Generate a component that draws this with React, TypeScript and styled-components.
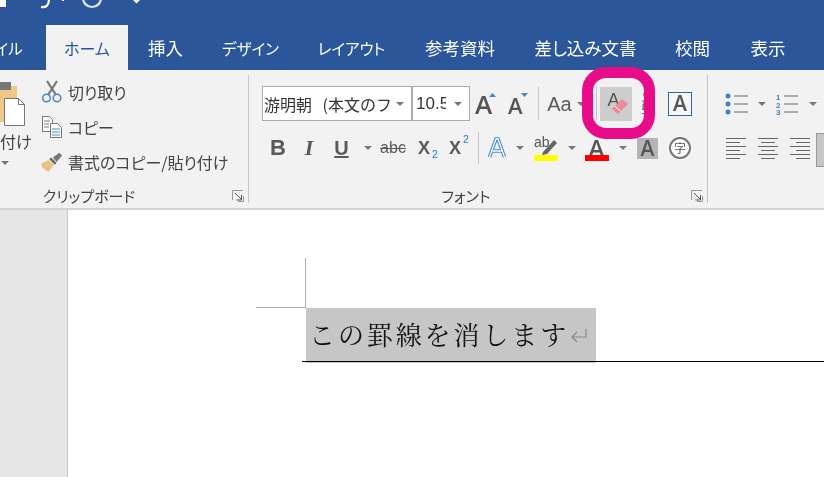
import React from "react";
import styled, { createGlobalStyle } from "styled-components";

const UI = `"Noto Sans CJK JP", "Liberation Sans", sans-serif`;
const Global = createGlobalStyle`
  html, body { margin: 0; padding: 0; background: #fff; overflow: hidden; }
  #root { width: 824px; height: 477px; }
`;
const Frame = styled.div`
  position: relative; width: 824px; height: 477px; overflow: hidden; display: flex; flex-direction: column;
  font-family: ${UI}; color: #444; font-feature-settings: "palt";
`;
const TitleBar = styled.div`height: 25px; background: #2b579a; flex: none;`;
const TabBar = styled.div`height: 45px; background: #2b579a; display: flex; align-items: stretch; flex: none; margin-left: -54px;`;
const Tab = styled.div<{ $active?: boolean; $w: number; $size?: number }>`
  width: ${p => p.$w}px; flex: none; display: flex; align-items: center; justify-content: center; font-size: ${p => p.$size ?? 17.5}px;
  color: ${p => (p.$active ? "#2b579a" : "#fff")}; background: ${p => (p.$active ? "#f2f2f2" : "transparent")};
`;
const Ribbon = styled.div`
  height: 138px; background: #f2f2f2; border-bottom: 2px solid #d4d4d4; display: flex; flex: none; position: relative;
`;
const Group = styled.div<{ $w: number; $noSep?: boolean }>`
  width: ${p => p.$w}px; flex: none; position: relative; box-sizing: border-box; display: flex; flex-direction: column;
  &::after { content: ""; display: ${p => (p.$noSep ? "none" : "block")}; position: absolute; right: 0; top: 5px; bottom: 5px; width: 1px; background: #c6c6c6; }
`;
const GroupBody = styled.div`flex: 1; display: flex; min-height: 0;`;
const ParaBody = styled.div`flex: 1; display: flex; flex-direction: column; padding-left: 17px;`;
const GroupLabel = styled.div<{ $pr: number }>`
  height: 26px; font-size: 15px; line-height: 28px; color: #444; text-align: center; flex: none; padding-right: ${p => p.$pr}px; box-sizing: border-box;
`;
const Launcher = styled.svg`position: absolute; right: 5px; top: 120px;`;
const PasteCol = styled.div`width: 41px; flex: none; position: relative; overflow: hidden; font-size: 16px;`;
const PasteArt = styled.svg`display: block;`;
const PasteLabel = styled.div`position: absolute; left: 0; top: 60px; white-space: nowrap; line-height: 22px;`;
const PasteCaret = styled.i`
  position: absolute; left: 1px; top: 91px; width: 0; height: 0;
  border-left: 4px solid transparent; border-right: 4px solid transparent; border-top: 4px solid #777;
`;
const ClipList = styled.div`display: flex; flex-direction: column; padding-top: 4px;`;
const ClipRow = styled.div`height: 35px; display: flex; align-items: center; gap: 5px; font-size: 16px; white-space: nowrap; color: #444;`;
const ClipIcon = styled.svg`flex: none;`;
const FontBody = styled.div`flex: 1; display: flex; flex-direction: column; padding-left: 13px;`;
const Row = styled.div<{ $h: number; $pt: number }>`
  height: ${p => p.$h}px; margin-top: ${p => p.$pt}px; display: flex; align-items: center; flex: none;
`;
const ComboGroup = styled.div`display: flex; height: 35px; border: 1px solid #ababab; background: #fff; box-sizing: border-box; flex: none;`;
const Combo = styled.div<{ $w: number; $bl?: boolean }>`
  width: ${p => p.$w}px; display: flex; align-items: center; justify-content: space-between; box-sizing: border-box; overflow: hidden;
  border-left: ${p => (p.$bl ? "2px solid #ababab" : "none")}; padding: 0 7px 0 ${p => (p.$bl ? 3 : 1)}px;
`;
const ComboText = styled.span<{ $size: number; $w: number; $font: string }>`
  font-size: ${p => p.$size}px; font-family: ${p => p.$font}; color: #333; white-space: nowrap; overflow: hidden; width: ${p => p.$w}px; display: block; line-height: 32px; flex: none;
  font-feature-settings: normal; word-spacing: 7px;
`;
const Caret = styled.i<{ $ml?: number }>`
  display: block; flex: none; width: 0; height: 0; margin-left: ${p => p.$ml ?? 0}px;
  border-left: 4px solid transparent; border-right: 4px solid transparent; border-top: 4px solid #777;
`;
const Sep = styled.div<{ $h: number; $ml: number; $mr: number }>`
  width: 1px; height: ${p => p.$h}px; margin: 0 ${p => p.$mr}px 0 ${p => p.$ml}px; background: #c6c6c6; flex: none;
`;
const Glyph = styled.span<{ $size: number; $w: number; $ml?: number; $font?: string; $weight?: number; $italic?: boolean; $under?: boolean; $strike?: boolean; $left?: boolean }>`
  display: flex; align-items: center; justify-content: ${p => (p.$left ? "flex-start" : "center")}; flex: none; width: ${p => p.$w}px; position: relative; margin-left: ${p => p.$ml ?? 0}px;
  font-family: ${p => p.$font ?? `"Liberation Sans", sans-serif`}; font-size: ${p => p.$size}px; font-weight: ${p => p.$weight ?? 400};
  font-style: ${p => (p.$italic ? "italic" : "normal")}; text-decoration: ${p => (p.$under ? "underline" : p.$strike ? "line-through" : "none")};
  color: #5a5a5a; line-height: 1;
`;
const Script = styled.span<{ $up?: boolean }>`
  position: absolute; left: 14px; top: ${p => (p.$up ? -5 : 10)}px; font-size: 10.5px; color: #2b7cd3; font-weight: 400;
`;
const IconSvg = styled.svg<{ $ml?: number }>`flex: none; display: block; overflow: visible; margin-left: ${p => p.$ml ?? 0}px;`;
const ClearBtn = styled.div`width: 32px; height: 34px; background: #cdcdcd; flex: none;`;
const ClearArt = styled.svg`display: block;`;
const BoxedA = styled.div`
  width: 24px; height: 24px; box-sizing: border-box; border: 1px solid #2b6ca8; background: #f7f7f7; display: flex; align-items: center; justify-content: center;
  font-family: "Open Sans", sans-serif; font-weight: 600; font-size: 21px; color: #555; margin-left: 13px; flex: none; line-height: 1;
`;
const ShadedA = styled.div`
  width: 21px; height: 21px; background: #b4b4b4; display: flex; align-items: center; justify-content: center; font-family: "Open Sans", sans-serif; font-weight: 600;
  font-size: 21px; color: #555; flex: none; margin-left: 10px; line-height: 1;
`;
const Enclosed = styled.div`
  width: 22px; height: 22px; box-sizing: border-box; border: 2px solid #777; border-radius: 50%; background: #fff; font-size: 12px; display: flex; align-items: center; justify-content: center;
  color: #555; flex: none; margin-left: 11px; line-height: 1;
`;
const JustifyBtn = styled.div`
  width: 30px; height: 34px; margin: 4px 0 0 6px; background: #c6c6c6; border: 1px solid #999; flex: none; box-sizing: border-box;
`;
const Highlight = styled.div`
  position: absolute; left: 582px; top: 67px; width: 73px; height: 72px; box-sizing: border-box; border: 11px solid #e80b8a; border-radius: 24px; pointer-events: none;
`;
const Workspace = styled.div`flex: 1; display: flex; min-height: 0;`;
const Gutter = styled.div`width: 67px; flex: none; background: #e6e6e6; border-right: 1px solid #c6c6c6;`;
const Page = styled.div`flex: 1; background: #fff; padding: 48px 0 0 188px; min-width: 0;`;
const CropMark = styled.div`
  width: 50px; height: 50px; box-sizing: border-box; border-right: 1px solid #b0b0b0; border-bottom: 1px solid #b0b0b0;
`;
const Para = styled.div`margin-left: 46px; height: 54px; border-bottom: 1px solid #000; box-sizing: border-box;`;
const Selected = styled.div`
  display: flex; align-items: center; margin-left: 4px; width: 290px; height: 55px; background: #c6c6c6; box-sizing: border-box; padding: 0 0 5px 3px; mix-blend-mode: multiply;
  font-family: "Noto Serif CJK JP", "Liberation Serif", serif; font-feature-settings: normal; font-size: 26px; letter-spacing: 2.9px; color: #111; white-space: nowrap;
`;
const ReturnMark = styled.svg`flex: none; margin: 5px 0 0 1px;`;

const Launch = () => (
  <Launcher width="12" height="12" viewBox="0 0 12 12" fill="none">
    <path d="M.5 10V.5H11" stroke="#999" />
    <path d="M3 3l6.500 6.500M9.500 5v5h-5" stroke="#555" />
    <path d="M11.500 6v5.500H6" stroke="#999" />
  </Launcher>
);

export default function App() {
  return (
    <Frame>
      <Global />
      <TitleBar>
        <svg width="160" height="25" viewBox="0 0 160 25" fill="none" style={{ display: "block" }}>
          <rect x="0" y="0" width="6" height="7" fill="#fff" />
          <path d="M41 7c5 1 8-2 8-8" stroke="#fff" strokeWidth="2.200" />
          <rect x="62" y="0" width="2" height="1" fill="#fff" />
          <circle cx="92" cy="-2" r="9" stroke="#e4e8f0" strokeWidth="2.200" />
          <path d="M133 0h7l-3.500 3.500z" fill="#fff" />
        </svg>
      </TitleBar>
      <TabBar>
        <Tab $w={100} $size={15.5}>ファイル</Tab>
        <Tab $w={82} $active $size={16}>ホーム</Tab>
        <Tab $w={75}>挿入</Tab>
        <Tab $w={95} $size={15.6}>デザイン</Tab>
        <Tab $w={107} $size={15.5}>レイアウト</Tab>
        <Tab $w={110}>参考資料</Tab>
        <Tab $w={141}>差し込み文書</Tab>
        <Tab $w={73}>校閲</Tab>
        <Tab $w={78}>表示</Tab>
      </TabBar>
      <Ribbon>
        <Group $w={249}>
          <GroupBody>
            <PasteCol>
              <PasteArt width="41" height="60" viewBox="0 0 41 60">
                <path d="M-4 16h21v12H4v24H-4z" fill="#f0c988" />
                <rect x="0" y="12" width="11" height="8" fill="#777" />
                <path d="M4.500 28.500h14l6 6v21h-20z" fill="#fff" stroke="#777" />
                <path d="M18.500 28.500v6h6" fill="none" stroke="#777" />
              </PasteArt>
              <PasteLabel>付け</PasteLabel>
              <PasteCaret />
            </PasteCol>
            <ClipList>
              <ClipRow>
                <ClipIcon width="22" height="24" viewBox="0 0 22 24" fill="none">
                  <path d="M6 1l9 14M16 1L7 15" stroke="#777" strokeWidth="2.200" />
                  <circle cx="5.500" cy="18" r="3.800" stroke="#4a86c5" strokeWidth="1.500" />
                  <circle cx="16" cy="18" r="3.800" stroke="#4a86c5" strokeWidth="1.500" />
                </ClipIcon>
                切り取り
              </ClipRow>
              <ClipRow>
                <ClipIcon width="22" height="24" viewBox="0 0 22 24" fill="none">
                  <path d="M1.500 1.500h7l3 3v12h-10z" fill="#fff" stroke="#777" />
                  <path d="M9.500 8.500h7l4 4v10h-11z" fill="#fff" stroke="#777" />
                  <path d="M3 6h6M3 9h5M3 12h5" stroke="#777" />
                  <path d="M11 14h8M11 17h8M11 20h8" stroke="#4a86c5" />
                </ClipIcon>
                コピー
              </ClipRow>
              <ClipRow>
                <ClipIcon width="22" height="24" viewBox="0 0 24 24" fill="none">
                  <path d="M0 14l8-4 6 5-6 8-2-2-1 1-1-3-2 0z" fill="#eabf83" />
                  <path d="M9 9l6 6 2-2-6-6z" fill="#666" />
                  <path d="M13 7l7-5 3 3-6 7z" fill="#777" />
                </ClipIcon>
                書式のコピー/貼り付け
              </ClipRow>
            </ClipList>
          </GroupBody>
          <GroupLabel $pr={71}>クリップボード<Launch /></GroupLabel>
        </Group>
        <Group $w={459}>
          <FontBody>
            <Row $h={35} $pt={16}>
              <ComboGroup>
                <Combo $w={148}>
                  <ComboText $size={16} $w={129} $font={`"Noto Sans CJK JP", sans-serif`}>游明朝 (本文のフォント)</ComboText>
                  <Caret />
                </Combo>
                <Combo $w={58} $bl>
                  <ComboText $size={17} $w={30} $font={`"Liberation Sans", sans-serif`}>10.5</ComboText>
                  <Caret />
                </Combo>
              </ComboGroup>
              <IconSvg width="24" height="22" viewBox="0 0 24 22" $ml={5}>
                <text x="0" y="20.500" fontFamily="Open Sans" fontWeight="600" fontSize="26" fill="#555">A</text>
                <path d="M14 4l3.500-4 3.500 4z" fill="#4a86c5" />
              </IconSvg>
              <IconSvg width="20" height="22" viewBox="0 0 20 22" $ml={9}>
                <text x="0" y="20.500" fontFamily="Open Sans" fontWeight="600" fontSize="22" fill="#555">A</text>
                <path d="M13 0h7l-3.500 4z" fill="#4a86c5" />
              </IconSvg>
              <Sep $h={33} $ml={10} $mr={8} />
              <Glyph $size={20} $w={25}>Aa</Glyph>
              <Caret $ml={5} />
              <Sep $h={33} $ml={11} $mr={3} />
              <ClearBtn>
                <ClearArt width="32" height="34" viewBox="0 0 32 34" fill="none">
                  <text x="7.500" y="19" fontFamily="Liberation Sans" fontSize="18" fill="#555">A</text>
                  <path d="M12 22l10-10 6 5-10 10z" fill="#ea8a9a" />
                  <path d="M15 19l6 5.500" stroke="#f3f3f3" />
                </ClearArt>
              </ClearBtn>
              <IconSvg width="13" height="24" viewBox="0 0 13 24" $ml={10} fill="none">
                <path d="M1 2.500h7M2 .5v4" stroke="#777" />
                <path d="M0 9h10M1 12.500h8v5H1zM2 9v8M0 17.500h13M0 21.500h11" stroke="#666" />
              </IconSvg>
              <BoxedA>A</BoxedA>
            </Row>
            <Row $h={30} $pt={12}>
              <Glyph $size={22} $w={32} $weight={700}>B</Glyph>
              <Glyph $size={22} $w={30} $font={`"Liberation Serif", serif`} $italic $weight={700}>I</Glyph>
              <Glyph $size={20} $w={35} $weight={700} $under>U</Glyph>
              <Caret $ml={5} />
              <Glyph $size={16} $w={24} $ml={9} $strike>abc</Glyph>
              <Glyph $size={18} $w={14} $ml={13} $weight={700} $left>X<Script>2</Script></Glyph>
              <Glyph $size={18} $w={14} $ml={17} $weight={700} $left>X<Script $up>2</Script></Glyph>
              <Sep $h={32} $ml={15} $mr={9} />
              <IconSvg width="18" height="22" viewBox="0 0 18 22" fill="none">
                <path d="M1.500 20L8 2h2l6.500 18M4.500 14h9" stroke="#4a8ad4" strokeWidth="3.600" />
                <path d="M1.500 20L8 2h2l6.500 18M4.500 14h9" stroke="#fff" strokeWidth="1.300" />
              </IconSvg>
              <Caret $ml={10} />
              <IconSvg width="24" height="26" viewBox="0 0 24 26" $ml={10} fill="none">
                <text x="0" y="12" fontFamily="Liberation Sans" fontSize="14" fill="#555">ab</text>
                <path d="M9 17l11-12 3 3-10 11-5 1z" fill="#666" />
                <rect x="0" y="20" width="24" height="6" fill="#ffff00" />
              </IconSvg>
              <Caret $ml={10} />
              <IconSvg width="24" height="26" viewBox="0 0 24 26" $ml={9}>
                <text x="3.500" y="22" fontFamily="Open Sans" fontWeight="600" fontSize="24" fill="#555">A</text>
                <rect x="0" y="20" width="24" height="6" fill="#ff0000" />
              </IconSvg>
              <Caret $ml={10} />
              <ShadedA>A</ShadedA>
              <Enclosed>字</Enclosed>
            </Row>
            <GroupLabel $pr={38} style={{ marginTop: "auto" }}>フォント<Launch /></GroupLabel>
          </FontBody>
        </Group>
        <Group $w={116} $noSep>
          <ParaBody>
            <Row $h={35} $pt={16}>
              <IconSvg width="24" height="22" viewBox="0 0 24 22" fill="none">
                <circle cx="3" cy="3" r="2.500" fill="#4a7ebb" /><circle cx="3" cy="11" r="2.500" fill="#4a7ebb" /><circle cx="3" cy="19" r="2.500" fill="#4a7ebb" />
                <path d="M9 3h14M9 11h14M9 19h14" stroke="#666" />
              </IconSvg>
              <Caret $ml={9} />
              <IconSvg width="24" height="22" viewBox="0 0 24 22" fill="none" $ml={10}>
                <text x="0" y="7" fontFamily="Liberation Sans" fontSize="8" fontWeight="700" fill="#4a7ebb">1</text>
                <text x="0" y="14.500" fontFamily="Liberation Sans" fontSize="8" fontWeight="700" fill="#4a7ebb">2</text>
                <text x="0" y="22" fontFamily="Liberation Sans" fontSize="8" fontWeight="700" fill="#4a7ebb">3</text>
                <path d="M8 3h14M8 11h14M8 19h14" stroke="#666" />
              </IconSvg>
              <Caret $ml={9} />
            </Row>
            <Row $h={30} $pt={12}>
              <IconSvg width="85" height="24" viewBox="0 0 85 24" fill="none">
                <path d="M1 2.500h20M1 6.500h14M1 10.500h20M1 14.500h14M1 18.500h20M1 22.500h14" stroke="#666" />
                <path d="M33 2.500h20M36 6.500h14M33 10.500h20M36 14.500h14M33 18.500h20M36 22.500h14" stroke="#666" />
                <path d="M65 2.500h20M71 6.500h14M65 10.500h20M71 14.500h14M65 18.500h20M71 22.500h14" stroke="#666" />
              </IconSvg>
              <JustifyBtn />
            </Row>
          </ParaBody>
        </Group>
      </Ribbon>
      <Workspace>
        <Gutter />
        <Page>
          <CropMark />
          <Para>
            <Selected>
              この罫線を消します
              <ReturnMark width="18" height="16" viewBox="0 0 18 16" fill="none">
                <path d="M16 1v8H2M7 4L2 9l5 5" stroke="#888" strokeWidth="1.200" />
              </ReturnMark>
            </Selected>
          </Para>
        </Page>
      </Workspace>
      <Highlight />
    </Frame>
  );
}
